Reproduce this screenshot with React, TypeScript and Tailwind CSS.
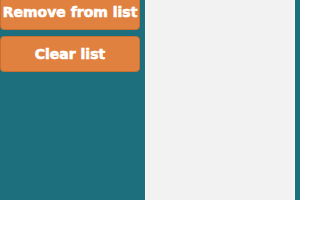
import React from 'react';

const buttons = ['Remove from list', 'Clear list'];

const App: React.FC = () => {
  return (
    <div className="w-[300px] h-[200px] overflow-hidden bg-[#1d6f7e] flex">
      <div className="w-[145px] shrink-0 flex flex-col gap-[6px] -mt-[6px]">
        {buttons.map((label) => (
          <button
            key={label}
            className="w-[140px] h-[36px] rounded-[4px] bg-[#e0813f] border border-[#c8702f] text-white text-[14px] font-bold leading-none whitespace-nowrap flex items-center justify-center [-webkit-text-stroke:0.6px_white]"
            style={{ fontFamily: '"DejaVu Sans", Verdana, sans-serif' }}
          >
            {label}
          </button>
        ))}
      </div>
      <div className="w-[150px] h-full shrink-0 bg-[#f2f2f2] border-l border-r border-[#fafafa]" />
    </div>
  );
};

export default App;
